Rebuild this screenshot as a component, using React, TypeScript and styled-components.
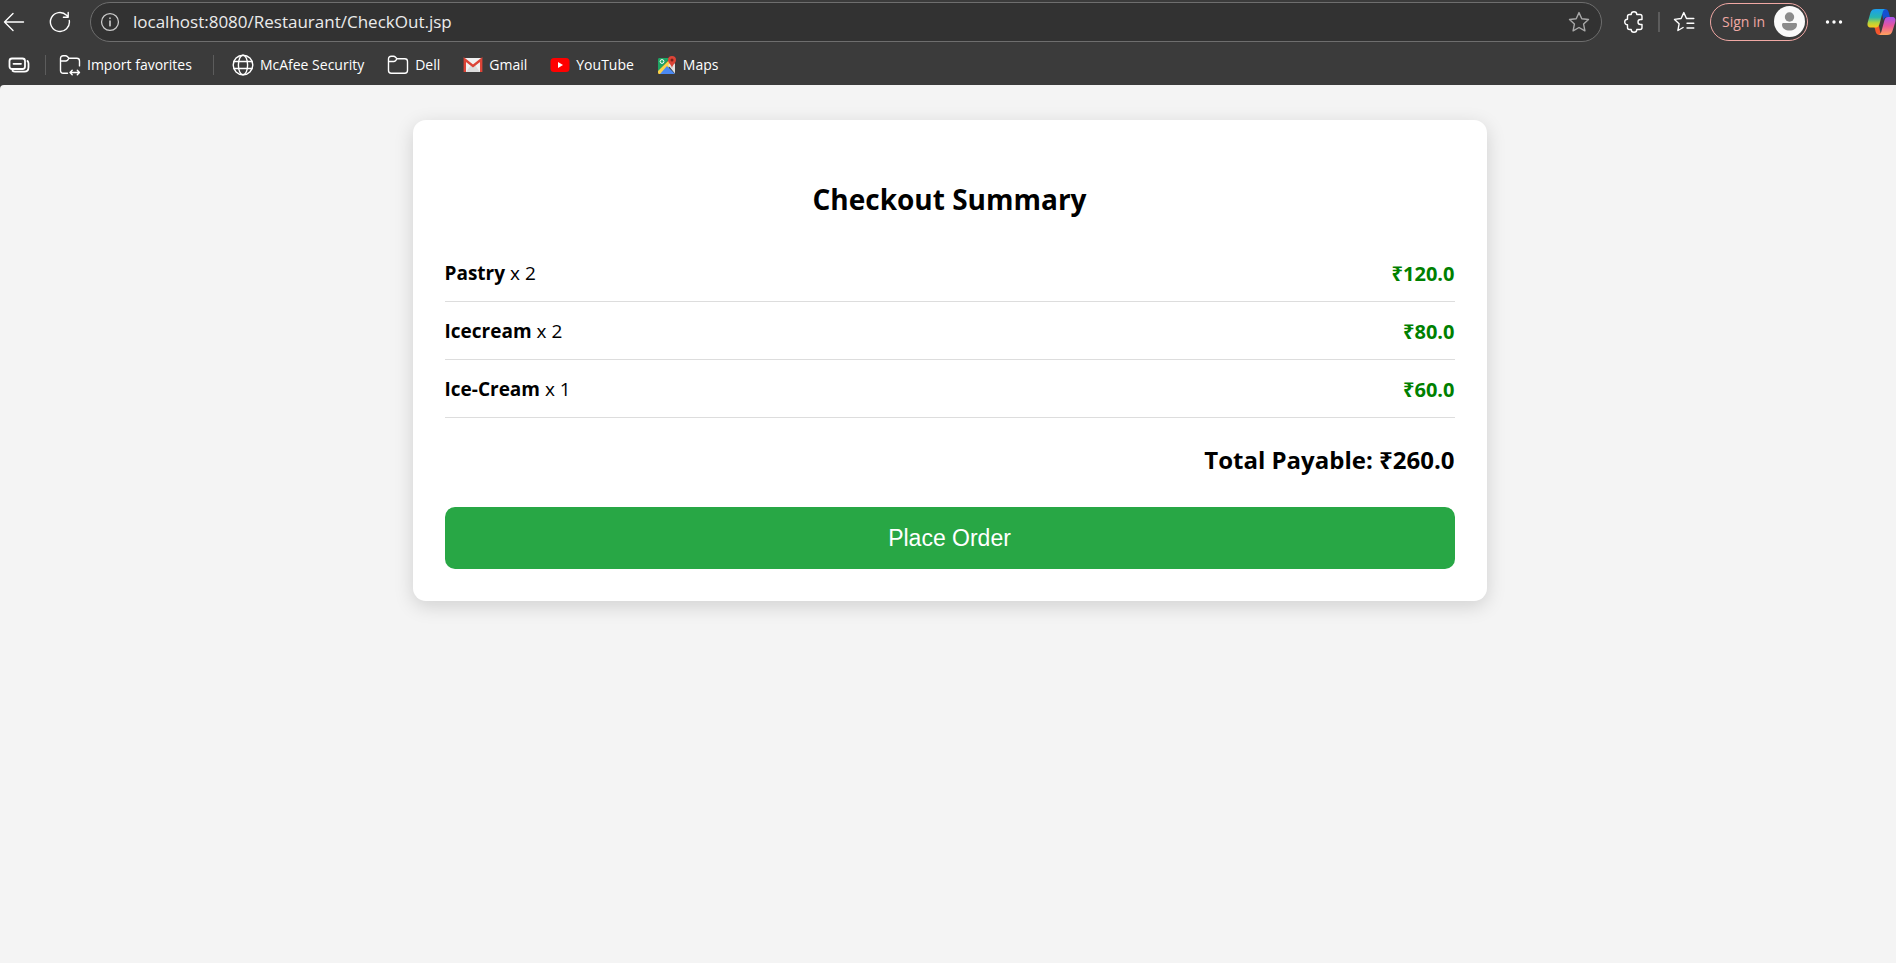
import React from 'react';
import styled, { createGlobalStyle } from 'styled-components';

const GlobalStyle = createGlobalStyle`
  *, *::before, *::after { box-sizing: border-box; }
  body {
    margin: 0;
    background: #3b3b3b;
    color: #000;
    font-family: "Segoe UI", "Open Sans", "Noto Sans", sans-serif;
  }
`;

const Page = styled.div`
  min-height: 100vh;
  display: flex;
  flex-direction: column;
`;

const Chrome = styled.header`
  background: #3b3b3b;
  color: #fff;
`;

const Toolbar = styled.div`
  display: flex;
  align-items: center;
  height: 43px;
`;

const ToolGroup = styled.div<{ $gap: number }>`
  display: flex;
  align-items: center;
  gap: ${(p) => p.$gap}px;
`;

const IconButton = styled.button<{ $width?: number }>`
  display: flex;
  align-items: center;
  justify-content: center;
  flex: none;
  width: ${(p) => p.$width ?? 28}px;
  height: 32px;
  padding: 0;
  border: 0;
  background: none;
  color: #fff;
`;

const AddressBar = styled.div`
  flex: 1;
  min-width: 0;
  display: flex;
  align-items: center;
  height: 40px;
  margin: 0 18px 0 16px;
  padding: 0 8px 0 5px;
  border: 1px solid #6e6e6e;
  border-radius: 20px;
  background: #323232;
`;

const AddressInput = styled.input`
  flex: 1;
  min-width: 0;
  height: 32px;
  margin-left: 9px;
  padding: 0;
  border: 0;
  outline: 0;
  background: none;
  color: #ebebeb;
  font: 400 17px/24px "Segoe UI", "Open Sans", "Noto Sans", sans-serif;
`;

const Divider = styled.span<{ $width: number; $gap?: number }>`
  flex: none;
  width: ${(p) => p.$width}px;
  height: 20px;
  margin-left: ${(p) => p.$gap ?? 0}px;
  background: #5c5c5c;
`;

const SignIn = styled.button`
  display: flex;
  align-items: center;
  justify-content: space-between;
  flex: none;
  width: 98px;
  height: 38px;
  padding: 0 2px 0 11px;
  border: 1px solid #f0a8a4;
  border-radius: 19px;
  background: none;
  color: #f0a8a4;
  font: 400 14px/20px "Segoe UI", "Open Sans", "Noto Sans", sans-serif;
  white-space: nowrap;
`;

const Bookmarks = styled.nav`
  display: flex;
  align-items: center;
  height: 42px;
  padding: 2px 0 0 5px;
`;

const Bookmark = styled.a<{ $gap?: number }>`
  display: flex;
  align-items: center;
  gap: 6px;
  margin-left: ${(p) => p.$gap ?? 23}px;
  color: #fff;
  font-size: 14px;
  line-height: 20px;
  text-decoration: none;
  white-space: nowrap;
`;

const Main = styled.main`
  flex: 1;
  padding: 35px 24px 35px 27px;
  border-top-left-radius: 4px;
  background: #f4f4f4;
`;

const Card = styled.section`
  max-width: 1074px;
  margin: 0 auto;
  padding: 32px;
  border-radius: 13px;
  background: #fff;
  box-shadow: 0 5px 19px rgba(0, 0, 0, 0.15);
`;

const Title = styled.h2`
  margin: 27px 0 25px;
  font-size: 28px;
  line-height: 40px;
  text-align: center;
`;

const Items = styled.ul`
  margin: 0;
  padding: 0;
  list-style: none;
`;

const Item = styled.li`
  display: flex;
  justify-content: space-between;
  padding: 16px 0 14px;
  border-bottom: 1px solid #ddd;
  font-size: 19px;
  line-height: 27px;
`;

const Price = styled.span`
  color: green;
  font-size: 20px;
  font-weight: 700;
`;

const Total = styled.p`
  margin: 26px 0 31px;
  font-size: 24px;
  font-weight: 700;
  line-height: 32px;
  text-align: right;
`;

const OrderButton = styled.button`
  display: block;
  width: 100%;
  height: 62px;
  border: 0;
  border-radius: 10px;
  background: #28a745;
  color: #fff;
  font: 400 23px/28px Arial, "Liberation Sans", sans-serif;
`;

type LineProps = { size?: number; color?: string; children: React.ReactNode };

const Line = ({ size = 22, color = '#fff', children }: LineProps) => (
  <svg width={size} height={size} viewBox="0 0 22 22" fill="none" stroke={color} strokeWidth="1.4"
    strokeLinecap="round" strokeLinejoin="round" aria-hidden="true">
    {children}
  </svg>
);

const STAR = 'M11 1.6 13.8 7.7 20.5 8.5 15.6 13.1 16.9 19.8 11 16.5 5.1 19.8 6.4 13.1 1.5 8.5 8.2 7.7Z';

const Copilot = () => (
  <svg width="29" height="28" viewBox="0 0 29 28" aria-hidden="true">
    <defs>
      <linearGradient id="cpA" x1="0" y1="0" x2="0" y2="1">
        <stop offset="0" stopColor="#1b9df0" />
        <stop offset=".45" stopColor="#27b6b0" />
        <stop offset=".75" stopColor="#b5d33a" />
        <stop offset="1" stopColor="#f8c91c" />
      </linearGradient>
      <linearGradient id="cpB" x1="0" y1="0" x2="0" y2="1">
        <stop offset="0" stopColor="#a552ee" />
        <stop offset=".5" stopColor="#e9579a" />
        <stop offset="1" stopColor="#ffa45c" />
      </linearGradient>
    </defs>
    <path d="M14 1h4c2 0 3 1 3.600 3l1.400 5h-3c-2 0-3 1-3.600 3Z" fill="#1450d2" />
    <path d="M6 18h6l1 5c.4 2 1.500 4 4 4h-4c-2.500 0-3.700-1-4.300-3L8 21c-.5-2-1-3-2-3Z" fill="#f4552c" />
    <path d="M9 1h10c-2 0-2.800 1.500-3.400 3.500L12.500 16c-.6 2-1.600 3.500-3.600 3.500H4c-3 0-4-2-3.300-5L3.500 4.500C4.300 2 6 1 9 1Z" fill="url(#cpA)" />
    <path d="M20 27H11c2 0 2.800-1.500 3.400-3.500L17.500 12c.6-2 1.600-3 3.600-3H25c3 0 4 2 3.300 5l-3 9.500c-.8 2.500-2.300 3.500-5.300 3.500Z" fill="url(#cpB)" />
  </svg>
);

const Avatar = () => (
  <svg width="31" height="31" viewBox="0 0 31 31" aria-hidden="true">
    <circle cx="15.500" cy="15.500" r="15.500" fill="#fafafa" />
    <circle cx="15.500" cy="11" r="4.700" fill="#8b8b8b" />
    <path d="M9.500 17h12c1 0 1.500.6 1.500 1.500 0 4-3.500 6-7.500 6S8 22.500 8 18.500c0-.9.5-1.500 1.500-1.500Z" fill="#8b8b8b" />
  </svg>
);

const FOLDER = 'M1.500 5.500v11c0 1.700 1 2.700 2.700 2.700h13.600c1.700 0 2.700-1 2.700-2.700V7.400c0-1.700-1-2.700-2.700-2.700H10L8.300 3c-.5-.5-1-.7-1.700-.7H4.200c-1.700 0-2.700 1-2.700 2.700ZM1.500 7.500h5.300c.7 0 1.200-.2 1.700-.7L10 4.700';

const Gmail = () => (
  <svg width="20" height="16" viewBox="0 0 20 16" aria-hidden="true">
    <rect x="1" y="1" width="18" height="14" rx="1" fill="#f1f1f1" />
    <path d="M3 15 8 8l2 1.500L12 8l5 7Z" fill="#dcdcdc" />
    <path d="M1.800 15V2.500L10 9l8.200-6.500V15" fill="none" stroke="#dc4437" strokeWidth="2.400" />
  </svg>
);

const YouTube = () => (
  <svg width="20" height="14" viewBox="0 0 20 14" aria-hidden="true">
    <rect x=".5" width="19" height="14" rx="3.500" fill="#f00" />
    <path d="M8 4v6l5-3Z" fill="#fff" />
  </svg>
);

const Maps = () => (
  <svg width="20" height="20" viewBox="0 0 20 20" aria-hidden="true">
    <path d="M1 4.500C1 3.500 1.700 3 2.500 3H13L1 17Z" fill="#1fa463" />
    <path d="M1 16 13 4l4 4L4 19H2.500C1.700 19 1 18.500 1 17.500Z" fill="#fdd147" />
    <path d="M10 11 18 19H3Z" fill="#4a89f3" />
    <path d="m11 10 5-4 2 3v9.500Z" fill="#e2e2e2" />
    <circle cx="5" cy="6.500" r="1.900" fill="none" stroke="#fff" strokeWidth="1" />
    <path d="M15 1a4 4 0 0 1 4 4c0 3-3.400 4.500-4 8-.6-3.500-4-5-4-8a4 4 0 0 1 4-4Z" fill="#dc4437" />
    <circle cx="15" cy="5" r="1.500" fill="#7c2219" />
  </svg>
);

const items = [
  { name: 'Pastry', quantity: 2, price: '120.0' },
  { name: 'Icecream', quantity: 2, price: '80.0' },
  { name: 'Ice-Cream', quantity: 1, price: '60.0' },
];

export default function App() {
  return (
    <Page>
      <GlobalStyle />
      <Chrome>
        <Toolbar>
          <ToolGroup $gap={18}>
            <IconButton aria-label="Back">
              <Line><path d="M20.500 11H1.500M10 2.500 1.500 11l8.500 8.500" /></Line>
            </IconButton>
            <IconButton aria-label="Refresh">
              <Line><path d="M20.300 9.500A9.500 9.500 0 1 1 17.600 4.200l1.500 1.600M19.200 1.500v4.800h-4.800" /></Line>
            </IconButton>
          </ToolGroup>
          <AddressBar>
            <IconButton aria-label="Site information">
              <Line size={20} color="#ccc">
                <circle cx="11" cy="11" r="9.300" />
                <path d="M11 10v5.200M11 6.800v.3" strokeWidth="1.800" />
              </Line>
            </IconButton>
            <AddressInput aria-label="Address" defaultValue="localhost:8080/Restaurant/CheckOut.jsp" />
            <IconButton aria-label="Add to favorites">
              <Line color="#a8a8a8"><path d={STAR} /></Line>
            </IconButton>
          </AddressBar>
          <ToolGroup $gap={12}>
            <ToolGroup $gap={10}>
              <IconButton aria-label="Extensions">
                <Line>
                  <path d="M6.500 3.500h1.700a2.800 2.800 0 0 1 5.600 0H17c1.200 0 2 .8 2 2v3h-1.500a2.500 2.500 0 0 0 0 5H19v3c0 1.200-.8 2-2 2h-3.200a2.800 2.800 0 0 1-5.600 0H6.500c-1.200 0-2-.8-2-2v-2.700a2.800 2.800 0 0 1 0-5.600V5.500c0-1.200.8-2 2-2Z" />
                </Line>
              </IconButton>
              <Divider $width={2} />
              <IconButton aria-label="Favorites">
                <Line>
                  <path d="M20.800 7.500h-7.300l-2.700-5.900-2.700 5.900-6.600.9 4.600 4.400-1.200 6.700 5.200-3M14 12.300h6.800M14 17h6.800" />
                </Line>
              </IconButton>
            </ToolGroup>
            <SignIn>Sign in<Avatar /></SignIn>
            <IconButton aria-label="Settings and more">
              <svg width="18" height="4" viewBox="0 0 18 4" fill="#fff" aria-hidden="true">
                <circle cx="2.500" cy="2" r="1.700" /><circle cx="9" cy="2" r="1.700" /><circle cx="15.500" cy="2" r="1.700" />
              </svg>
            </IconButton>
            <CopilotButton $width={36} aria-label="Copilot"><Copilot /></CopilotButton>
          </ToolGroup>
        </Toolbar>
        <Bookmarks aria-label="Favorites bar">
          <IconButton aria-label="Tab actions">
            <Line>
              <rect x="1.500" y="4.500" width="15.500" height="10.500" rx="2.500" strokeWidth="1.800" />
              <path d="M5.500 9.800h7.500M19.500 7c.7.700 1 1.500 1 2.500v3.700c0 2.600-1.600 4.400-4.200 4.400H7c-1 0-1.800-.3-2.500-.8" strokeWidth="1.800" />
            </Line>
          </IconButton>
          <Divider $width={1} $gap={12} />
          <Bookmark href="#import" $gap={13}>
            <Line>
              <path d="M8.500 19.200H4.200c-1.700 0-2.700-1-2.700-2.700V4.500c0-1.700 1-2.700 2.700-2.700h2.400c.7 0 1.200.2 1.700.7L10 4.200h7.800c1.700 0 2.700 1 2.700 2.700v5M1.500 7h5.300c.7 0 1.200-.2 1.700-.7L10 4.200M11 18.500h9.500M13.200 16.200 11 18.500l2.200 2.300M18.300 16.200l2.200 2.300-2.200 2.300" />
            </Line>
            Import favorites
          </Bookmark>
          <Divider $width={1} $gap={21} />
          <Bookmark href="#mcafee" $gap={18}>
            <Line>
              <circle cx="11" cy="11" r="9.800" />
              <ellipse cx="11" cy="11" rx="4.600" ry="9.800" />
              <path d="M2 7.500h18M2 14.500h18" />
            </Line>
            McAfee Security
          </Bookmark>
          <Bookmark href="#dell"><Line><path d={FOLDER} /></Line>Dell</Bookmark>
          <Bookmark href="#gmail"><Gmail />Gmail</Bookmark>
          <Bookmark href="#youtube"><YouTube />YouTube</Bookmark>
          <Bookmark href="#maps"><Maps />Maps</Bookmark>
        </Bookmarks>
      </Chrome>
      <Main>
        <Card>
          <Title>Checkout Summary</Title>
          <Items>
            {items.map((item) => (
              <Item key={item.name}>
                <span><b>{item.name}</b> x {item.quantity}</span>
                <Price>₹{item.price}</Price>
              </Item>
            ))}
          </Items>
          <Total>Total Payable: ₹260.0</Total>
          <OrderButton type="submit">Place Order</OrderButton>
        </Card>
      </Main>
    </Page>
  );
}

const CopilotButton = styled(IconButton)`
  justify-content: flex-end;
`;
